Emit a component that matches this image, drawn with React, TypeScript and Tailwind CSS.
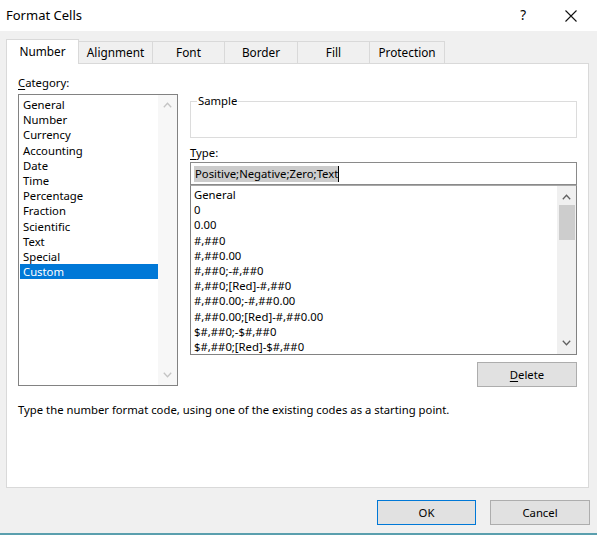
import React from 'react';

const categories = [
  'General',
  'Number',
  'Currency',
  'Accounting',
  'Date',
  'Time',
  'Percentage',
  'Fraction',
  'Scientific',
  'Text',
  'Special',
  'Custom',
];

const formats = [
  'General',
  '0',
  '0.00',
  '#,##0',
  '#,##0.00',
  '#,##0;-#,##0',
  '#,##0;[Red]-#,##0',
  '#,##0.00;-#,##0.00',
  '#,##0.00;[Red]-#,##0.00',
  '$#,##0;-$#,##0',
  '$#,##0;[Red]-$#,##0',
];

const tabs = [
  { label: 'Number', w: 'w-[73px]' },
  { label: 'Alignment', w: 'w-[74px]' },
  { label: 'Font', w: 'w-[72px]' },
  { label: 'Border', w: 'w-[73px]' },
  { label: 'Fill', w: 'w-[72px]' },
  { label: 'Protection', w: 'w-[75px]' },
];

const Chevron = ({ up, color }: { up?: boolean; color: string }) => (
  <svg width="9" height="6" viewBox="0 0 9 6" className="block">
    <path
      d={up ? 'M0.8 5.2 L4.5 1.3 L8.2 5.2' : 'M0.8 0.8 L4.5 4.7 L8.2 0.8'}
      fill="none"
      stroke={color}
      strokeWidth="1.3"
    />
  </svg>
);

export default function App() {
  return (
    <div className="w-[597px] h-[535px] bg-[#f0f0f0] flex flex-col overflow-hidden text-[11.3px] text-black font-['Noto_Sans',sans-serif] select-none">
      {/* Title bar */}
      <div className="h-[31px] bg-white flex items-center shrink-0">
        <span className="pl-[6px] text-[13px] leading-none">Format Cells</span>
        <div className="ml-auto flex items-center">
          <span className="text-[13.5px] leading-none mr-[39px]">?</span>
          <svg width="12" height="12" viewBox="0 0 12 12" className="mr-[20px]">
            <path d="M0.5 0.5 L11.5 11.5 M11.5 0.5 L0.5 11.5" stroke="#111" strokeWidth="1.1" />
          </svg>
        </div>
      </div>

      {/* Tabs */}
      <div className="mt-[8px] ml-[6px] h-[24px] flex items-end relative z-10 text-[11.8px]">
        {tabs.map((t, i) =>
          i === 0 ? (
            <div
              key={t.label}
              className={`${t.w} h-[25px] -mb-px bg-white border border-b-0 border-[#d9d9d9] flex items-center justify-center`}
            >
              {t.label}
            </div>
          ) : (
            <div
              key={t.label}
              className={`${t.w} h-[22px] bg-[#f0f0f0] border-t border-r border-[#d9d9d9] flex items-center justify-center`}
            >
              {t.label}
            </div>
          )
        )}
      </div>

      {/* Panel */}
      <div className="ml-[6px] mr-[8px] h-[425px] bg-white border border-[#d9d9d9] pl-[11px] pr-[11px] pt-[11px]">
        <div className="flex gap-[12px]">
          {/* Left: Category */}
          <div className="w-[160px] shrink-0">
            <div className="leading-[16px] h-[19px]">
              <span className="underline underline-offset-2">C</span>ategory:
            </div>
            <div className="h-[292px] border border-[#828282] flex">
              <div className="flex-1 pt-[2px] pl-[1px]">
                {categories.map((c) => (
                  <div
                    key={c}
                    className={`h-[15.2px] leading-[15.2px] pl-[3px] ${
                      c === 'Custom' ? 'bg-[#0078d7] text-white' : ''
                    }`}
                  >
                    {c}
                  </div>
                ))}
              </div>
              <div className="w-[19px] bg-[#f7f7f7] flex flex-col items-center justify-between py-[7px]">
                <Chevron up color="#c4c4c4" />
                <Chevron color="#c4c4c4" />
              </div>
            </div>
          </div>

          {/* Right: Sample / Type */}
          <div className="w-[387px] shrink-0 pt-[26px]">
            <div className="relative h-[37px] border border-[#dcdcdc]">
              <span className="absolute left-[6px] -top-[9px] bg-white px-[1px] leading-[16px]">
                Sample
              </span>
            </div>
            <div className="mt-[7px] leading-[16px] h-[17px]">
              <span className="underline underline-offset-2">T</span>ype:
            </div>
            <div className="h-[23px] border border-[#8a8a8a] flex items-center pl-[3px]">
              <span className="bg-[#cccccc] leading-[16px] pl-[1px]">
                Positive;Negative;Zero;Text
              </span>
              <span className="w-px h-[16px] bg-black" />
            </div>
            <div className="h-[170px] border border-[#828282] border-t-[#a8a8a8] flex">
              <div className="flex-1 pt-[1px] pl-[3px]">
                {formats.map((f) => (
                  <div key={f} className="h-[15.2px] leading-[15.2px] whitespace-nowrap">
                    {f}
                  </div>
                ))}
              </div>
              <div className="w-[19px] bg-[#f0f0f0] flex flex-col items-center py-[8px]">
                <Chevron up color="#606060" />
                <div className="mt-[5px] w-[16px] h-[35px] bg-[#cdcdcd]" />
                <div className="mt-auto">
                  <Chevron color="#606060" />
                </div>
              </div>
            </div>
            <div className="mt-[7px] flex justify-end">
              <button className="w-[100px] h-[25px] bg-[#e1e1e1] border border-[#adadad] leading-none">
                <span className="underline underline-offset-2">D</span>elete
              </button>
            </div>
          </div>
        </div>

        <div className="mt-[15px] leading-[16px]">
          Type the number format code, using one of the existing codes as a starting point.
        </div>
      </div>

      {/* Footer buttons */}
      <div className="mt-[12px] flex justify-end pr-[7px] gap-[14px]">
        <button className="w-[99px] h-[25px] bg-[#e1e1e1] border border-[#0078d7] leading-none">
          OK
        </button>
        <button className="w-[100px] h-[25px] bg-[#e1e1e1] border border-[#adadad] leading-none">
          Cancel
        </button>
      </div>

      <div className="mt-auto h-[2px] bg-[#5a9fae]" />
    </div>
  );
}
